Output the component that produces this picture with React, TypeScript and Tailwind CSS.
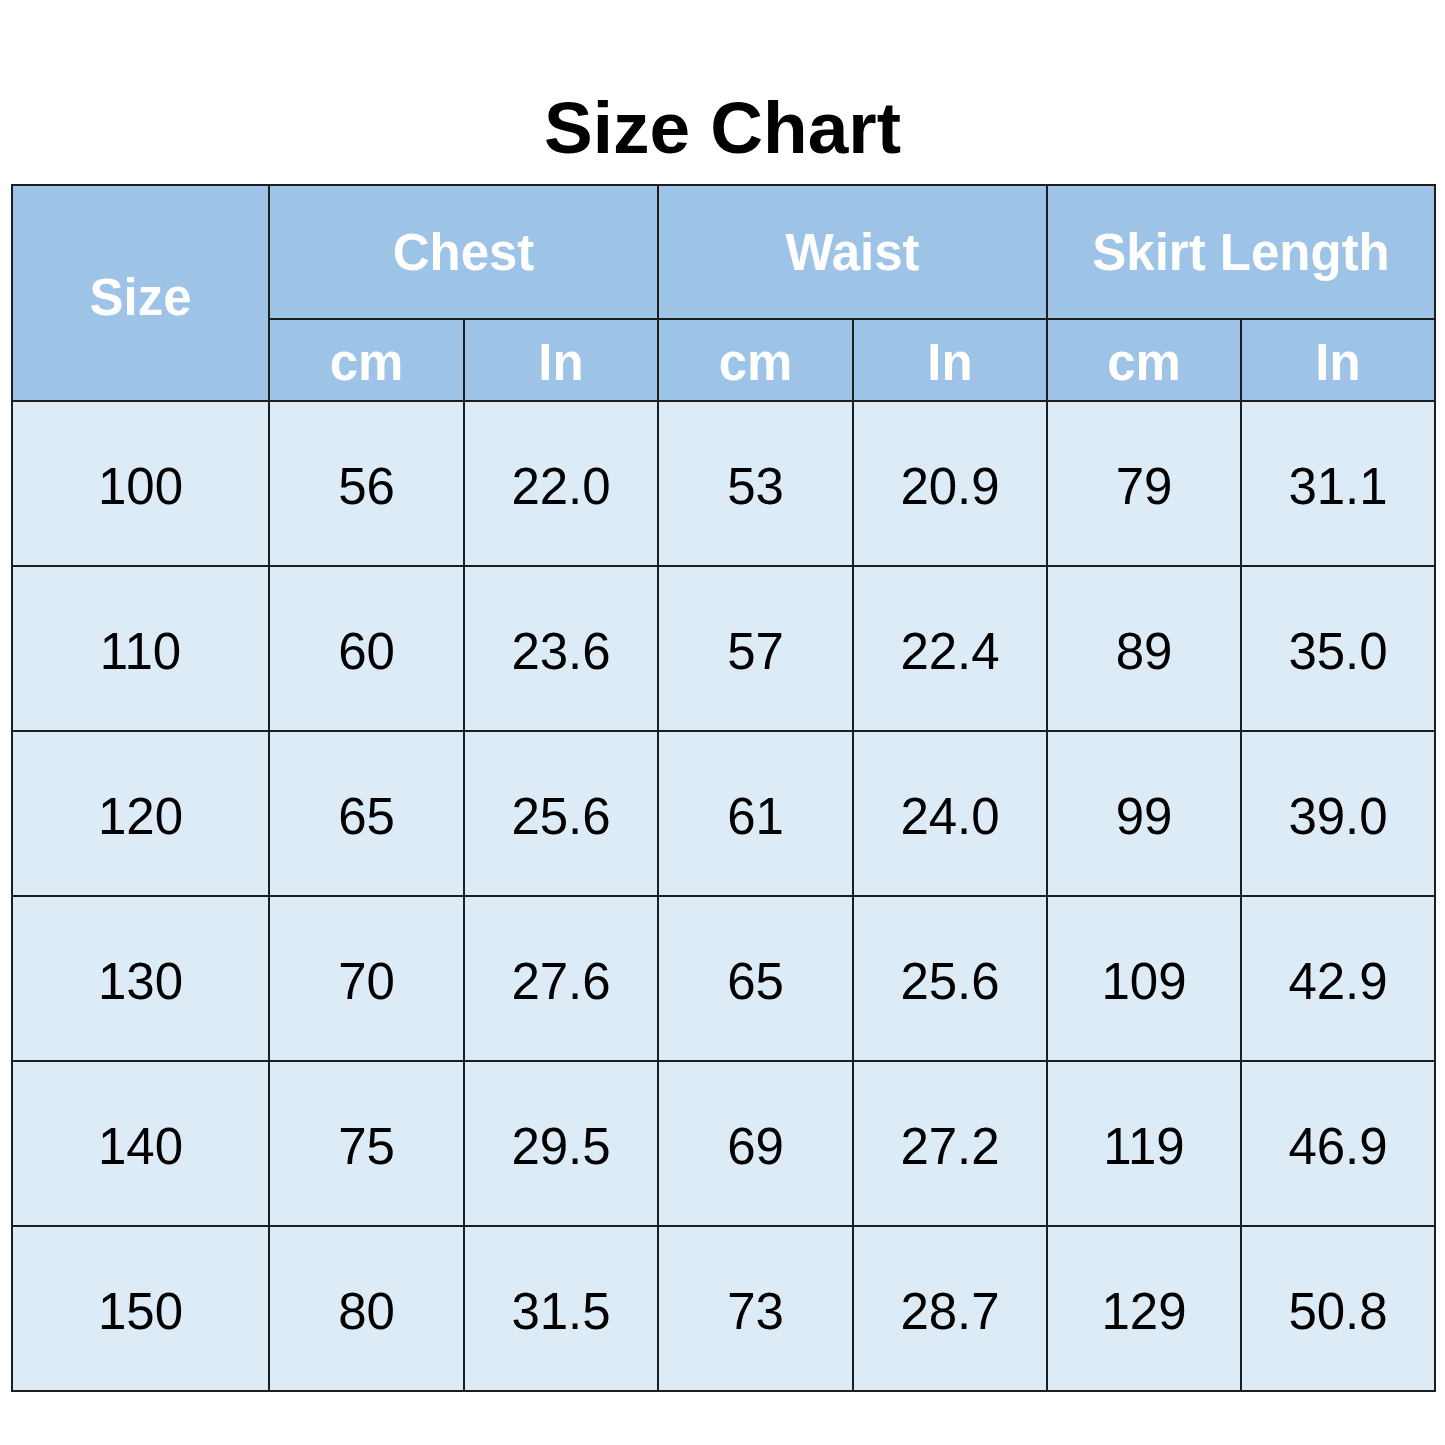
import React from "react";

const rows = [
  ["100", "56", "22.0", "53", "20.9", "79", "31.1"],
  ["110", "60", "23.6", "57", "22.4", "89", "35.0"],
  ["120", "65", "25.6", "61", "24.0", "99", "39.0"],
  ["130", "70", "27.6", "65", "25.6", "109", "42.9"],
  ["140", "75", "29.5", "69", "27.2", "119", "46.9"],
  ["150", "80", "31.5", "73", "28.7", "129", "50.8"],
];

export default function App() {
  const font = { fontFamily: '"Liberation Sans", Arial, sans-serif' };
  return (
    <div className="w-[1445px] h-[1445px] bg-white" style={font}>
      <div className="h-[184px] pt-[91px] text-center">
        <h1 className="text-[73px] leading-none font-bold text-black">Size Chart</h1>
      </div>
      <table className="ml-[11px] w-[1424px] table-fixed border-collapse border-2 border-[#1e1e1e]">
        <colgroup>
          <col className="w-[257px]" />
          <col className="w-[195px]" />
          <col className="w-[194px]" />
          <col className="w-[195px]" />
          <col className="w-[194px]" />
          <col className="w-[194px]" />
          <col className="w-[194px]" />
        </colgroup>
        <thead>
          <tr className="h-[134px]">
            <th rowSpan={2} className="border-2 border-[#1e1e1e] bg-[#9dc3e6] text-white font-bold text-[51px] leading-none pt-[8px]">Size</th>
            <th colSpan={2} className="border-2 border-[#1e1e1e] bg-[#9dc3e6] text-white font-bold text-[51px] leading-none">Chest</th>
            <th colSpan={2} className="border-2 border-[#1e1e1e] bg-[#9dc3e6] text-white font-bold text-[51px] leading-none">Waist</th>
            <th colSpan={2} className="border-2 border-[#1e1e1e] bg-[#9dc3e6] text-white font-bold text-[51px] leading-none">Skirt Length</th>
          </tr>
          <tr className="h-[82px]">
            {["cm", "In", "cm", "In", "cm", "In"].map((u, i) => (
              <th key={i} className="border-2 border-[#1e1e1e] bg-[#9dc3e6] text-white font-bold text-[51px] leading-none pt-[4px]">{u}</th>
            ))}
          </tr>
        </thead>
        <tbody>
          {rows.map((r, ri) => (
            <tr key={ri} className="h-[165px]">
              {r.map((c, ci) => (
                <td key={ci} className="border-2 border-[#1e1e1e] bg-[#ddebf7] text-black text-center text-[51px] leading-none pt-[6px]">{c}</td>
              ))}
            </tr>
          ))}
        </tbody>
      </table>
    </div>
  );
}
